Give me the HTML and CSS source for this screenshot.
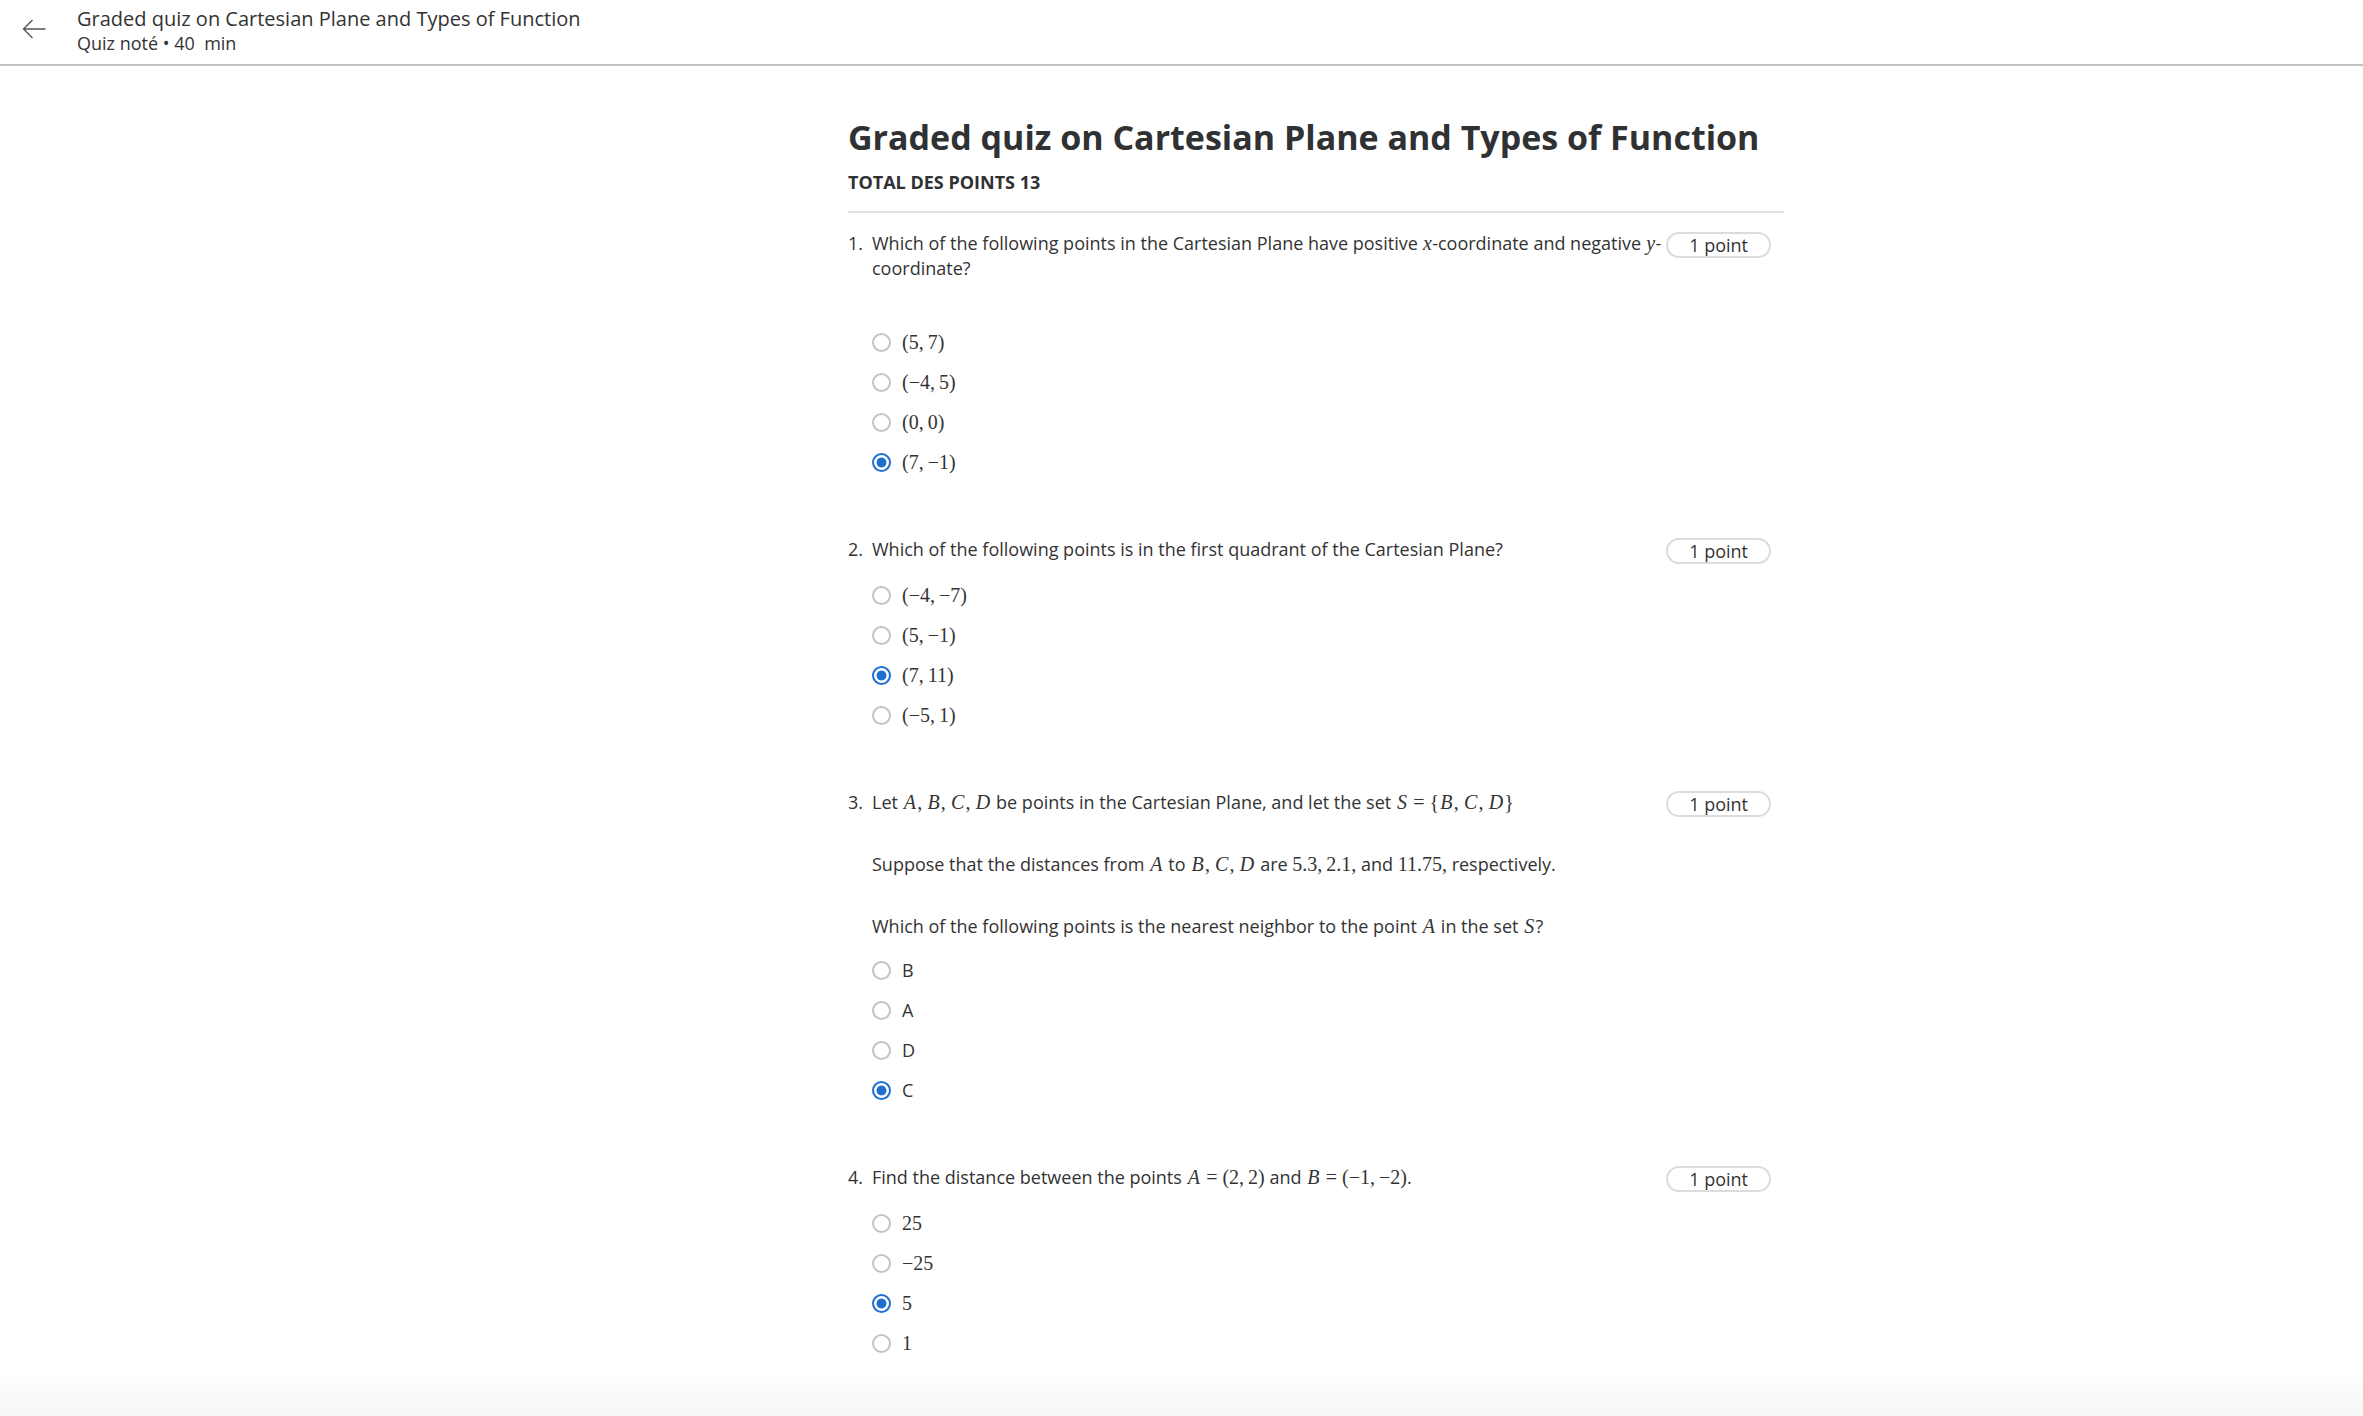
FILE: index.html
```html
<!DOCTYPE html>
<html lang="en">
<head>
<meta charset="utf-8">
<title>Graded quiz on Cartesian Plane and Types of Function</title>
<link rel="stylesheet" href="styles.css">
</head>
<body>
<header class="topbar">
  <button class="back" aria-label="Back">
    <svg width="24" height="22" viewBox="0 0 24 22"><path d="M23.5 11H1.5M10.5 2L1.5 11l9 9" fill="none" stroke="#555" stroke-width="1.4"/></svg>
  </button>
  <div class="titles">
    <div class="t1">Graded quiz on Cartesian Plane and Types of Function</div>
    <div class="t2">Quiz noté • 40&nbsp; min</div>
  </div>
</header>

<main class="content">
  <h1>Graded quiz on Cartesian Plane and Types of Function</h1>
  <div class="total">TOTAL DES POINTS 13</div>
  <hr class="divider">

  <div class="questions">
    <section class="q">
      <div class="qhead">
        <span class="num">1.</span>
        <div class="prompt">
          <p>Which of the following points in the Cartesian Plane have positive <span class="m"><i class="lc">x</i></span>-coordinate and negative <span class="m"><i class="lc">y</i></span>-coordinate?</p>
          <div class="gap"></div>
        </div>
        <span class="pill">1 point</span>
      </div>
      <ul class="opts">
        <li><input type="radio" class="radio" name="q1"><span class="m">(5,&#8201;7)</span></li>
        <li><input type="radio" class="radio" name="q1"><span class="m">(&minus;4,&#8201;5)</span></li>
        <li><input type="radio" class="radio" name="q1"><span class="m">(0,&#8201;0)</span></li>
        <li><input type="radio" class="radio" name="q1" checked><span class="m">(7,&#8201;&minus;1)</span></li>
      </ul>
    </section>

    <section class="q">
      <div class="qhead">
        <span class="num">2.</span>
        <div class="prompt">
          <p>Which of the following points is in the first quadrant of the Cartesian Plane?</p>
        </div>
        <span class="pill">1 point</span>
      </div>
      <ul class="opts">
        <li><input type="radio" class="radio" name="q2"><span class="m">(&minus;4,&#8201;&minus;7)</span></li>
        <li><input type="radio" class="radio" name="q2"><span class="m">(5,&#8201;&minus;1)</span></li>
        <li><input type="radio" class="radio" name="q2" checked><span class="m">(7,&#8201;11)</span></li>
        <li><input type="radio" class="radio" name="q2"><span class="m">(&minus;5,&#8201;1)</span></li>
      </ul>
    </section>

    <section class="q">
      <div class="qhead">
        <span class="num">3.</span>
        <div class="prompt">
          <p>Let <span class="m"><i>A</i>,&#8201;<i>B</i>,&#8201;<i>C</i>,&#8201;<i>D</i></span> be points in the Cartesian Plane, and let the set <span class="m"><i>S</i>&#8197;=&#8197;{<i>B</i>,&#8201;<i>C</i>,&#8201;<i>D</i>}</span></p>
          <p>Suppose that the distances from <span class="m"><i>A</i></span> to <span class="m"><i>B</i>,&#8201;<i>C</i>,&#8201;<i>D</i></span> are <span class="m">5.3,&#8201;2.1,</span> and <span class="m">11.75,</span> respectively.</p>
          <p>Which of the following points is the nearest neighbor to the point <span class="m"><i>A</i></span> in the set <span class="m"><i>S</i></span>?</p>
        </div>
        <span class="pill">1 point</span>
      </div>
      <ul class="opts">
        <li><input type="radio" class="radio" name="q3"><span>B</span></li>
        <li><input type="radio" class="radio" name="q3"><span>A</span></li>
        <li><input type="radio" class="radio" name="q3"><span>D</span></li>
        <li><input type="radio" class="radio" name="q3" checked><span>C</span></li>
      </ul>
    </section>

    <section class="q">
      <div class="qhead">
        <span class="num">4.</span>
        <div class="prompt">
          <p>Find the distance between the points <span class="m"><i>A</i>&#8197;=&#8197;(2,&#8201;2)</span> and <span class="m"><i>B</i>&#8197;=&#8197;(&minus;1,&#8201;&minus;2)</span>.</p>
        </div>
        <span class="pill">1 point</span>
      </div>
      <ul class="opts">
        <li><input type="radio" class="radio" name="q4"><span class="m">25</span></li>
        <li><input type="radio" class="radio" name="q4"><span class="m">&minus;25</span></li>
        <li><input type="radio" class="radio" name="q4" checked><span class="m">5</span></li>
        <li><input type="radio" class="radio" name="q4"><span class="m">1</span></li>
      </ul>
    </section>
  </div>
</main>

<div class="fade"></div>
</body>
</html>
```

FILE: styles.css
```css
* { box-sizing: border-box; }

body {
  margin: 0;
  font-family: "Open Sans", "Liberation Sans", sans-serif;
  color: #333;
  background: #fff;
}

/* top bar */
.topbar {
  display: flex;
  align-items: flex-start;
  height: 66px;
  padding: 7px 0 0 22px;
  border-bottom: 2px solid #c2c2c2;
}
.back {
  display: block;
  width: 24px;
  height: 22px;
  margin-top: 11px;
  padding: 0;
  border: 0;
  background: none;
}
.back svg { display: block; }
.titles { margin-left: 31px; }
.t1 { font-size: 20px; line-height: 24px; color: #333; }
.t2 { font-size: 18px; line-height: 24px; color: #333; }

/* main column */
.content {
  width: 936px;
  margin-left: 848px;
  padding-top: 51px;
}
h1 {
  margin: 0;
  font-size: 34px;
  line-height: 40px;
  font-weight: 700;
  color: #2f3133;
}
.total {
  margin-top: 13px;
  font-size: 18px;
  line-height: 24px;
  font-weight: 700;
  color: #2f3133;
}
.divider {
  margin: 17px 0 0;
  border: 0;
  height: 2px;
  background: #e2e2e2;
}

.questions {
  display: flex;
  flex-direction: column;
  gap: 55px;
  margin-top: 18px;
}

.qhead {
  display: flex;
  align-items: flex-start;
  font-size: 18px;
  line-height: 25px;
}
.num { width: 24px; flex-shrink: 0; }
.prompt { flex: 1; }
.prompt p { margin: 0; }
.prompt p + p { margin-top: 37px; }
.prompt .gap { height: 30px; }

.pill {
  flex-shrink: 0;
  margin: 1px 13px 0 2px;
  height: 26px;
  padding: 0 21px;
  border: 2px solid #dcdcdc;
  border-radius: 13px;
  font-size: 18px;
  line-height: 22px;
  white-space: nowrap;
}

/* math */
.m {
  font-family: "Liberation Serif", "DejaVu Serif", serif;
  font-size: 20px;
  line-height: 1;
  white-space: nowrap;
}
.m i {
  font-style: italic;
  padding: 0 0.06em;
}
.m i.lc { padding: 0 0.02em; }

/* options */
.opts {
  list-style: none;
  margin: 11px 0 0 24px;
  padding: 0;
}
.opts li {
  display: flex;
  align-items: center;
  gap: 11px;
  height: 40px;
  font-size: 18px;
}
.radio {
  appearance: none;
  -webkit-appearance: none;
  flex-shrink: 0;
  width: 19px;
  height: 19px;
  margin: 0;
  border: 2px solid #c4c4c4;
  border-radius: 50%;
  background: #fff;
}
.radio:checked {
  border-color: #1f6fd0;
  background: radial-gradient(circle, #1f6fd0 0 4.6px, #fff 5.3px);
}

/* bottom fade */
.fade {
  position: fixed;
  left: 0;
  right: 0;
  bottom: 0;
  height: 46px;
  background: linear-gradient(rgba(248, 248, 248, 0), #f6f6f6);
  pointer-events: none;
}
```
